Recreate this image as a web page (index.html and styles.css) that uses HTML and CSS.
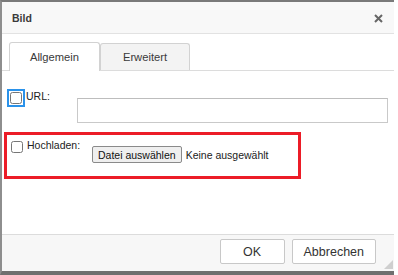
FILE: index.html
```html
<!DOCTYPE html>
<html lang="de">
<head>
    <meta charset="UTF-8">
    <title>Bild</title>
    <link rel="stylesheet" href="styles.css">
</head>
<body>
    <div class="dialog">
        <div class="titlebar">
            <span class="title">Bild</span>
            <span class="close">
                <svg width="9" height="9" viewBox="0 0 9 9">
                    <path d="M1 1 L8 8 M8 1 L1 8" stroke="#666" stroke-width="2" fill="none"/>
                </svg>
            </span>
        </div>

        <div class="content">
            <div class="tabs">
                <div class="tab active">Allgemein</div>
                <div class="tab">Erweitert</div>
            </div>

            <div class="panel">
                <div class="url-row">
                    <label class="check-label url-label">
                        <input type="checkbox" class="focused">URL:
                    </label>
                    <input type="text" class="url-input">
                </div>

                <div class="upload-box">
                    <label class="check-label upload-label">
                        <input type="checkbox">Hochladen:
                    </label>
                    <div class="file-row">
                        <button class="file-btn">Datei auswählen</button>
                        <span class="file-name">Keine ausgewählt</span>
                    </div>
                </div>
            </div>
        </div>

        <div class="footer">
            <button class="btn btn-ok">OK</button>
            <button class="btn">Abbrechen</button>
            <span class="grip"></span>
        </div>
    </div>
</body>
</html>
```

FILE: styles.css
```css
* {
    margin: 0;
    padding: 0;
    box-sizing: border-box;
}

body {
    background: #fff;
    font-family: 'Liberation Sans', Arial, sans-serif;
    color: #333;
}

.dialog {
    width: 394px;
    height: 275px;
    border-top: 2px solid #7a7a7a;
    border-left: 2px solid #8e8e8e;
    border-bottom: 4px solid #6f6f6f;
    display: flex;
    flex-direction: column;
    position: relative;
}

.titlebar {
    height: 32px;
    background: #f8f8f8;
    border-bottom: 1px solid #e2e2e2;
    display: flex;
    align-items: center;
    justify-content: space-between;
    padding: 0 11px 0 10px;
}

.title {
    font-size: 10.5px;
    font-weight: bold;
    color: #3a3a3a;
}

.close {
    display: flex;
    margin-top: 1px;
}

.content {
    flex: 1;
    background: #fff;
}

.tabs {
    display: flex;
    margin-top: 8px;
    padding-left: 7px;
    height: 29px;
    border-bottom: 1px solid #dcdcdc;
}

.tab {
    height: 27px;
    margin-top: 1px;
    border: 1px solid #d2d2d2;
    border-bottom: none;
    border-radius: 3px 3px 0 0;
    background: #f3f3f3;
    font-size: 11.2px;
    color: #3a3a3a;
    display: flex;
    align-items: center;
    justify-content: center;
    width: 90px;
}

.tab.active {
    width: 91px;
    height: 29px;
    margin-top: 0;
    background: #fff;
}

.panel {
    padding: 0 6px 0 1px;
}

.check-label {
    display: flex;
    align-items: flex-start;
    font-size: 10.5px;
    line-height: 12px;
    color: #222;
}

.check-label input {
    width: 12px;
    height: 12px;
    margin: 2px 4px 0 0;
}

.check-label input.focused {
    outline: 2px solid #2a92ea;
    outline-offset: 1px;
}

.url-row {
    display: flex;
    align-items: flex-start;
    margin-top: 19px;
    padding-left: 7px;
}

.url-label {
    width: 67px;
}

.url-input {
    width: 311px;
    height: 25px;
    margin-top: 8px;
    border: 1px solid #c9c9c9;
    border-top-color: #bdbdbd;
    background: #fff;
}

.upload-box {
    width: 297px;
    height: 47px;
    margin-top: 9px;
    margin-left: 1px;
    border: 3px solid #ec1c27;
    padding: 4px 0 0 4px;
    display: flex;
    align-items: flex-start;
}

.upload-label {
    width: 81px;
}

.file-row {
    display: flex;
    align-items: center;
    margin-top: 7px;
    font-size: 10.5px;
    color: #222;
}

.file-btn {
    height: 17px;
    padding: 0 5px;
    font-family: 'Liberation Sans', Arial, sans-serif;
    font-size: 10.5px;
    color: #111;
    background: #efefef;
    border: 1px solid #8a8a8a;
    border-radius: 2px;
    margin-right: 4px;
}

.footer {
    height: 37px;
    background: #f7f7f7;
    border-top: 1px solid #dcdcdc;
    display: flex;
    justify-content: flex-end;
    align-items: flex-start;
    gap: 7px;
    padding: 4px 18px 0 0;
    position: relative;
}

.btn {
    height: 25px;
    padding: 0 11px;
    font-family: 'Liberation Sans', Arial, sans-serif;
    font-size: 12.5px;
    color: #333;
    background: #fff;
    border: 1px solid #c8c8c8;
    border-radius: 2px;
}

.btn-ok {
    width: 65px;
}

.grip {
    position: absolute;
    right: 1px;
    bottom: 2px;
    width: 0;
    height: 0;
    border-left: 9px solid transparent;
    border-bottom: 9px solid #cfcfcf;
}
```
